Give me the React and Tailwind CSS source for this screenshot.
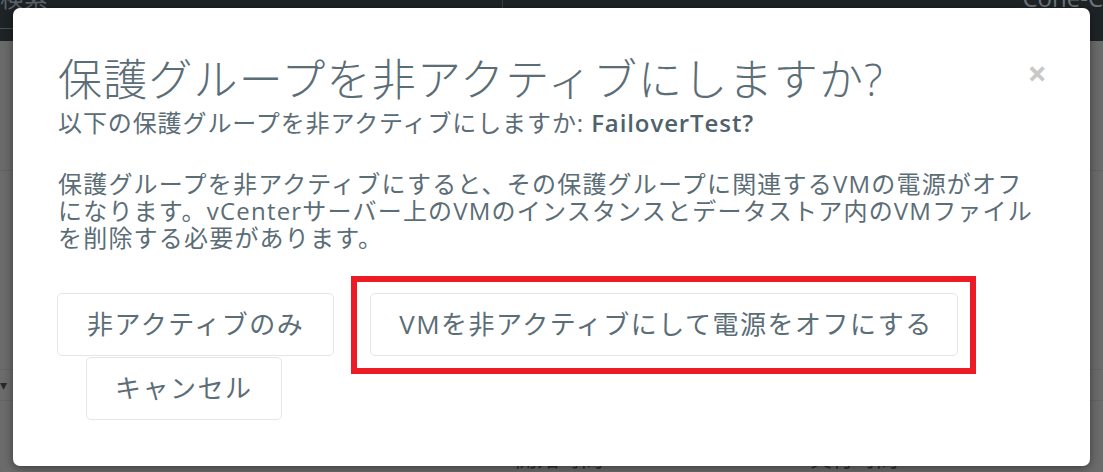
export default function App() {
  const font = { fontFamily: '"Open Sans", "Noto Sans CJK JP", sans-serif' };
  const btn = "h-[63px] border border-[#e4e7e9] rounded-[5px] text-[26px] tracking-[1.5px] bg-white";
  return (
    <div className="relative w-[1103px] h-[472px] overflow-hidden bg-[#6b6b6b]" style={font}>
      {/* background page (dimmed) */}
      <div className="flex flex-col w-full h-full">
        <div className="h-[43px] bg-[#1e2326] flex">
          <div className="w-[503px] border-r border-[#3a4046] flex flex-col">
            <div className="h-[29px] border-b border-[#4a5056] overflow-hidden">
              <div className="text-[24px] leading-[20px] text-[#5c636a] mt-[-12px]">検索</div>
            </div>
          </div>
          <div className="flex-1 flex justify-end overflow-hidden">
            <div className="text-[24px] leading-[20px] text-[#6f767c] mt-[-12px] whitespace-nowrap">Cone-C</div>
          </div>
        </div>
        <div className="h-[135px] border-b border-[#626262] bg-[#6a6a6a]"></div>
        <div className="h-[208px] border-b border-[#646464]"></div>
        <div className="h-[32px] border-b border-[#646464] flex items-center">
          <span className="text-[14px] leading-none text-[#23292e]">▾</span>
        </div>
        <div className="flex-1 flex pl-[515px] pt-[41px] text-[22px] leading-[30px] text-[#2a2f33] whitespace-nowrap">
          <span className="w-[295px]">開始時間</span>
          <span className="w-[215px]">実行時間</span>
          <span className="font-bold">Stat</span>
        </div>
      </div>

      {/* modal */}
      <div className="absolute left-[13px] top-[8px] w-[1077px] h-[458px] bg-white rounded-[7px] shadow-[0_2px_10px_rgba(0,0,0,0.45)] text-[#5b6d76]">
        <div className="pt-[43px] pl-[45px] pr-[45px]">
          <div className="flex items-start justify-between">
            <h1 className="text-[44px] leading-[56px] font-light tracking-[1.2px]">保護グループを非アクティブにしますか?</h1>
            <button className="mt-[2px] mr-[-2px] text-[#c8c8c8] text-[34px] leading-[40px] font-bold">×</button>
          </div>
          <p className="text-[24px] leading-[30px] mt-[1px] tracking-[0.9px]">
            以下の保護グループを非アクティブにしますか: <span className="font-semibold text-[#4f626c]">FailoverTest?</span>
          </p>
          <p className="text-[24px] leading-[27px] mt-[32px] tracking-[1.2px] whitespace-nowrap">
            保護グループを非アクティブにすると、その保護グループに関連するVMの電源がオフ<br />
            になります。vCenterサーバー上のVMのインスタンスとデータストア内のVMファイル<br />
            を削除する必要があります。
          </p>
          <div className="flex flex-wrap mt-[42px] ml-[-1px]">
            <button className={`${btn} px-[29px] mr-[36px]`}>非アクティブのみ</button>
            <button className={`${btn} pl-[28px] pr-[24px]`}>VMを非アクティブにして電源をオフにする</button>
            <button className={`${btn} px-[28px] ml-[29px] mt-[1px]`}>キャンセル</button>
          </div>
        </div>
        {/* annotation highlight */}
        <div className="absolute left-[338px] top-[268px] w-[625px] h-[98px] border-[6px] border-[#ed1c24]"></div>
      </div>
    </div>
  );
}
